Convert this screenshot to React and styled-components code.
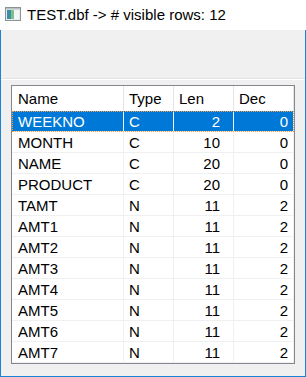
import React from "react";
import styled, { createGlobalStyle } from "styled-components";

const GlobalStyle = createGlobalStyle`
  html, body {
    margin: 0;
    padding: 0;
    background: #ffffff;
  }
`;

const Window = styled.div`
  width: 306px;
  height: 377px;
  display: flex;
  flex-direction: column;
  font-family: "Liberation Sans", Arial, sans-serif;
  color: #000;
  overflow: hidden;
`;

const TitleBar = styled.div`
  height: 30px;
  flex: none;
  background: #ffffff;
  display: flex;
  align-items: center;
  gap: 6px;
  padding-left: 5px;
  padding-bottom: 2px;
  box-sizing: border-box;
  font-size: 15px;
`;

const Body = styled.div`
  flex: 1;
  background: #f0f0f0;
  border: 1px solid #1883d7;
  border-top: none;
  display: flex;
  flex-direction: column;
`;

const ToolArea = styled.div`
  height: 48px;
  flex: none;
  border-bottom: 1px solid #e3e3e3;
  box-shadow: 0 1px 0 #ffffff;
`;

const List = styled.div`
  margin: 6px 10px 0 10px;
  background: #ffffff;
  border: 1px solid #828790;
  font-size: 15px;
`;

const Row = styled.div`
  display: grid;
  grid-template-columns: 112px 50px 60px 60px;
  height: ${(p) => (p.$header ? 25 : 21)}px;
  background: ${(p) => (p.$selected ? "#0078d7" : "transparent")};
  color: ${(p) => (p.$selected ? "#ffffff" : "#000000")};
  outline: ${(p) => (p.$selected ? "1px dotted #f5a04a" : "none")};
  outline-offset: -1px;
`;

const Cell = styled.div`
  display: flex;
  align-items: center;
  justify-content: ${(p) => (p.$right ? "flex-end" : "flex-start")};
  padding: 0 ${(p) => p.$pr || 6}px 0 ${(p) => p.$pl || 6}px;
  border-right: 1px solid ${(p) => (p.$header ? "#e5e5e5" : "#f0f0f0")};
  border-bottom: 1px solid ${(p) => (p.$header ? "#ffffff" : "#f0f0f0")};
  white-space: nowrap;
  overflow: hidden;
`;

const rows = [
  ["WEEKNO", "C", 2, 0],
  ["MONTH", "C", 10, 0],
  ["NAME", "C", 20, 0],
  ["PRODUCT", "C", 20, 0],
  ["TAMT", "N", 11, 2],
  ["AMT1", "N", 11, 2],
  ["AMT2", "N", 11, 2],
  ["AMT3", "N", 11, 2],
  ["AMT4", "N", 11, 2],
  ["AMT5", "N", 11, 2],
  ["AMT6", "N", 11, 2],
  ["AMT7", "N", 11, 2],
];

function AppIcon() {
  return (
    <svg width="16" height="16" viewBox="0 0 16 16">
      <rect x="0.5" y="1.5" width="15" height="13" fill="#e8ecec" stroke="#8a9496" />
      <rect x="2" y="4" width="4" height="9" fill="#3d8fa8" />
      <rect x="6" y="4" width="3" height="9" fill="#7fbf8a" />
      <rect x="9" y="4" width="5" height="9" fill="#f4f6f6" />
      <rect x="1" y="2" width="14" height="1.5" fill="#b8c2c4" />
    </svg>
  );
}

export default function App() {
  return (
    <Window>
      <GlobalStyle />
      <TitleBar>
        <AppIcon />
        <span>TEST.dbf -&gt; # visible rows: 12</span>
      </TitleBar>
      <Body>
        <ToolArea />
        <List>
          <Row $header>
            <Cell $header>Name</Cell>
            <Cell $header $pl={5}>Type</Cell>
            <Cell $header $pl={5}>Len</Cell>
            <Cell $header $pl={5}>Dec</Cell>
          </Row>
          {rows.map((r, i) => (
            <Row key={r[0]} $selected={i === 0}>
              <Cell>{r[0]}</Cell>
              <Cell $pl={5}>{r[1]}</Cell>
              <Cell $right $pr={13}>{r[2]}</Cell>
              <Cell $right $pr={5}>{r[3]}</Cell>
            </Row>
          ))}
        </List>
      </Body>
    </Window>
  );
}
